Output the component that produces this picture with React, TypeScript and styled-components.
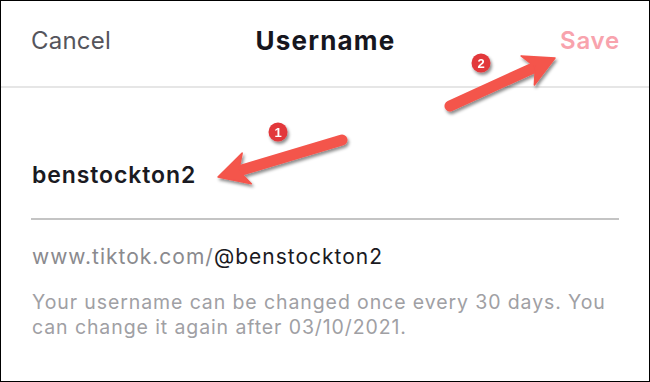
import React from 'react';
import styled, { createGlobalStyle } from 'styled-components';

const GlobalStyle = createGlobalStyle`
  html, body {
    margin: 0;
    padding: 0;
    background: #fff;
  }
  * {
    box-sizing: border-box;
  }
`;

const Frame = styled.div`
  position: relative;
  width: 650px;
  height: 382px;
  border: 1px solid #000;
  background: #fff;
  font-family: Inter, 'Liberation Sans', sans-serif;
  overflow: hidden;
`;

const Header = styled.header`
  height: 87px;
  display: flex;
  align-items: center;
  justify-content: space-between;
  padding: 0 29px 6px 30px;
  border-bottom: 2px solid #e6e6e6;
`;

const HeaderAction = styled.span<{ $tone: 'muted' | 'accent' }>`
  font-size: 24px;
  font-weight: ${(p) => (p.$tone === 'accent' ? 600 : 400)};
  letter-spacing: ${(p) => (p.$tone === 'accent' ? '0.8px' : '0.2px')};
  color: ${(p) => (p.$tone === 'accent' ? '#f8a3ad' : '#55555c')};
  width: 90px;
  text-align: ${(p) => (p.$tone === 'accent' ? 'right' : 'left')};
`;

const Title = styled.h1`
  margin: 0;
  font-size: 26px;
  font-weight: 700;
  letter-spacing: 1.2px;
  color: #16161e;
`;

const Body = styled.main`
  padding: 0 30px;
`;

const InputRow = styled.div`
  padding: 73px 0 0 1px;
  height: 132px;
  line-height: 28px;
  border-bottom: 2px solid #c4c4c4;
  font-size: 23px;
  font-weight: 600;
  letter-spacing: 0.9px;
  color: #1a1a22;
`;

const UrlLine = styled.p`
  margin: 24px 0 0 1px;
  font-size: 21px;
  line-height: 26px;
  letter-spacing: 1px;
  color: #8a8a8e;
`;

const Handle = styled.span`
  color: #1a1a22;
`;

const Note = styled.p`
  margin: 20px 0 0 1px;
  font-size: 19.5px;
  line-height: 25px;
  letter-spacing: 0.9px;
  color: #a0a0a4;
`;

const Overlay = styled.svg`
  position: absolute;
  inset: 0;
  pointer-events: none;
`;

type Pt = [number, number];

const arrowPath = (tail: Pt, tip: Pt, head: number, half: number) => {
  const dx = tip[0] - tail[0];
  const dy = tip[1] - tail[1];
  const len = Math.hypot(dx, dy);
  const ux = dx / len;
  const uy = dy / len;
  const nx = -uy;
  const ny = ux;
  const bx = tip[0] - ux * head;
  const by = tip[1] - uy * head;
  const notchX = tip[0] - ux * head * 0.72;
  const notchY = tip[1] - uy * head * 0.72;
  return {
    shaftEnd: [notchX + ux * 2, notchY + uy * 2] as Pt,
    head: `${tip[0]},${tip[1]} ${bx + nx * half},${by + ny * half} ${notchX},${notchY} ${bx - nx * half},${by - ny * half}`,
  };
};

const Arrow = ({ tail, tip }: { tail: Pt; tip: Pt }) => {
  const a = arrowPath(tail, tip, 30, 16);
  return (
    <g filter="url(#shadow)">
      <line
        x1={tail[0]}
        y1={tail[1]}
        x2={a.shaftEnd[0]}
        y2={a.shaftEnd[1]}
        stroke="#f4544c"
        strokeWidth={11}
        strokeLinecap="round"
      />
      <polygon points={a.head} fill="#f4544c" strokeLinejoin="round" stroke="#f4544c" strokeWidth={1.5} />
    </g>
  );
};

const Badge = ({ x, y, n }: { x: number; y: number; n: number }) => (
  <g filter="url(#shadow)">
    <circle cx={x} cy={y} r={9.5} fill="#e2373a" />
    <text
      x={x}
      y={y + 5}
      textAnchor="middle"
      fontSize="13"
      fontWeight="700"
      fill="#fff"
      fontFamily="'Liberation Sans', sans-serif"
    >
      {n}
    </text>
  </g>
);

export default function App() {
  return (
    <>
      <GlobalStyle />
      <Frame>
        <Header>
          <HeaderAction $tone="muted">Cancel</HeaderAction>
          <Title>Username</Title>
          <HeaderAction $tone="accent">Save</HeaderAction>
        </Header>
        <Body>
          <InputRow>benstockton2</InputRow>
          <UrlLine>
            www.tiktok.com/<Handle>@benstockton2</Handle>
          </UrlLine>
          <Note>
            Your username can be changed once every 30 days. You can change it again after 03/10/2021.
          </Note>
        </Body>
        <Overlay width={650} height={382} viewBox="0 0 650 382">
          <defs>
            <filter id="shadow" x="-20%" y="-20%" width="150%" height="160%">
              <feDropShadow dx="1.5" dy="2.5" stdDeviation="1.6" floodColor="#000" floodOpacity="0.45" />
            </filter>
          </defs>
          <Arrow tail={[449, 105]} tip={[554, 57]} />
          <Badge x={480} y={62} n={2} />
          <Arrow tail={[341, 139]} tip={[217, 176]} />
          <Badge x={277} y={131} n={1} />
        </Overlay>
      </Frame>
    </>
  );
}
